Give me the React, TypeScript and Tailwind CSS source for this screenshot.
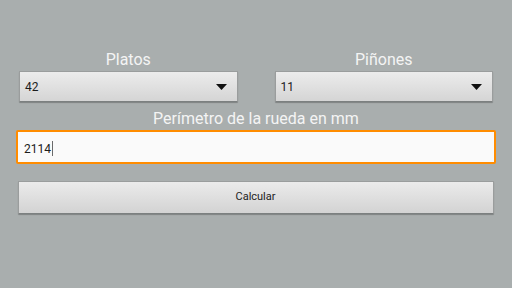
function Spinner({ value }: { value: string }) {
  return (
    <div className="flex h-[31px] items-center justify-between rounded-[1px] border border-[#9a9d9d] border-b-[#7c8080] bg-gradient-to-b from-[#ececec] to-[#d5d5d5] pl-[5px] pr-[10px] shadow-[0_1px_1px_rgba(0,0,0,0.25)]">
      <span className="text-[12px] text-[#1c1c1c]">{value}</span>
      <svg width="11" height="6" viewBox="0 0 11 6">
        <path d="M0 0 H11 L5.5 6 Z" fill="#111" />
      </svg>
    </div>
  );
}

export default function App() {
  return (
    <div
      className="h-[288px] w-[512px] bg-[#a9aeae] pt-[50px]"
      style={{ fontFamily: "Roboto, 'Liberation Sans', sans-serif" }}
    >
      {/* Platos / Piñones */}
      <div className="grid grid-cols-2 gap-[37px] px-[19px]">
        <div className="flex flex-col">
          <div className="text-center text-[16px] leading-[20px] text-[#f4f4f4]">Platos</div>
          <div className="mt-[1px]">
            <Spinner value="42" />
          </div>
        </div>
        <div className="flex flex-col">
          <div className="text-center text-[16px] leading-[20px] text-[#f4f4f4]">Piñones</div>
          <div className="mt-[1px]">
            <Spinner value="11" />
          </div>
        </div>
      </div>

      {/* Perímetro */}
      <div className="mt-[7px] text-center text-[16px] leading-[20px] text-[#f4f4f4]">
        Perímetro de la rueda en mm
      </div>
      <div className="mx-[16px] mt-[1px] flex h-[34px] items-center rounded-[2px] border-2 border-[#ff8c00] bg-[#fafafa] pl-[6px] pt-[3px]">
        <span className="text-[12px] text-[#1c1c1c]">2114</span>
        <span className="ml-[1px] h-[15px] w-[1px] bg-[#6a6a6a]" />
      </div>

      {/* Calcular */}
      <div className="mx-[18px] mt-[17px] flex h-[33px] items-center justify-center rounded-[1px] border border-[#9a9d9d] border-b-[#7c8080] bg-gradient-to-b from-[#ebebeb] to-[#d3d3d3] shadow-[0_1px_1px_rgba(0,0,0,0.25)] pr-[1px]">
        <span className="text-[11px] text-[#222]">Calcular</span>
      </div>
    </div>
  );
}
